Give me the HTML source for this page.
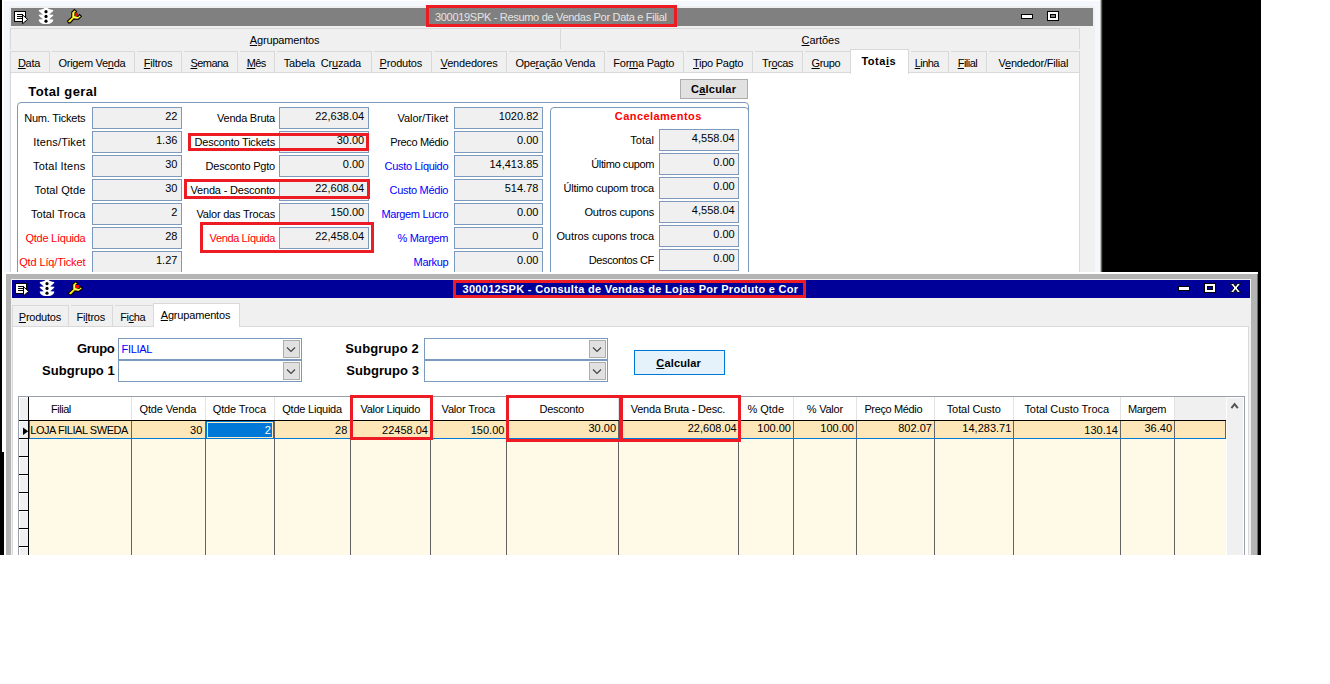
<!DOCTYPE html><html><head><meta charset="utf-8"><title>Resumo de Vendas</title><style>
html,body{margin:0;padding:0;background:#fff;}
body{width:1330px;height:684px;overflow:hidden;position:relative;font-family:"Liberation Sans",sans-serif;font-size:11px;}
.r{position:absolute;box-sizing:border-box;}
.t{position:absolute;white-space:pre;line-height:1;font-family:"Liberation Sans",sans-serif;}
.t u{text-decoration:underline;text-underline-offset:1px;text-decoration-thickness:1px;}
svg{position:absolute;overflow:visible;}
</style></head><body>
<div class="r" style="left:0px;top:0px;width:2px;height:555px;background:#000;"></div>
<div class="r" style="left:2px;top:452px;width:2px;height:103px;background:#000;"></div>
<div class="r" style="left:1100px;top:0px;width:1px;height:555px;background:#c4c4c4;"></div>
<div class="r" style="left:1101px;top:0px;width:1px;height:555px;background:#5e5e5e;"></div>
<div class="r" style="left:1102px;top:0px;width:1px;height:555px;background:#141414;"></div>
<div class="r" style="left:1103px;top:0px;width:158px;height:555px;background:#000;"></div>
<div class="r" style="left:4px;top:1px;width:1096px;height:272px;background:#f4f7fc;"></div>
<div class="r" style="left:9px;top:6px;width:1086px;height:268px;background:#f0f0f0;"></div>
<div class="r" style="left:11px;top:8px;width:1082px;height:18px;background:#808080;"></div>
<svg style="left:11px;top:8px" width="80" height="18" viewBox="0 0 80 18"><rect x="3.5" y="3.5" width="11" height="10" fill="#fff" stroke="#000" stroke-width="1"/><path d="M6 6.5H12M6 8.5H11.5M6 10.5H11.5" stroke="#000" stroke-width="1" fill="none"/><path d="M11.5 6.8L16.6 11.4L11.5 15.8Z" fill="#fff" stroke="#000" stroke-width="1" stroke-linejoin="miter"/><path d="M33.4 0H36.6C37.5 1.2 39.5 1.8 42.2 1.9V2.9L38.2 6.6L42.2 6.8V7.8L38.2 11.2L42.2 11.4V12.4C41.5 14.5 39 16 37 16H33C31 16 28.5 14.5 27.8 12.4V11.4L31.8 11.2L27.8 7.8V6.8L31.8 6.6L27.8 2.9V1.9C30.5 1.8 32.5 1.2 33.4 0Z" fill="#fff"/><circle cx="35" cy="3.7" r="1.6" fill="#000"/><circle cx="35" cy="8.4" r="1.6" fill="#000"/><circle cx="35" cy="13.2" r="1.6" fill="#000"/><path d="M63.4 1.6L65.6 3.5L64 5V7.6L67 8.3L68.5 6.6L70.4 8.3L67.5 11.1L63 10.9L59.2 14.9H57.5L56.5 13.1L60.8 9.1V4.3Z" fill="#ffee10" stroke="#000" stroke-width="1.1" stroke-linejoin="miter"/><path d="M62.2 4.6V8.6L63.4 9.8L67 10" stroke="#fff9a8" stroke-width="1" fill="none"/><rect x="64" y="5" width="3" height="3" fill="#ff0000"/></svg>
<div class="r" style="left:1021px;top:14px;width:12px;height:5px;background:#fff;border:1px solid #000;"></div>
<div class="r" style="left:1047px;top:11px;width:12px;height:10px;background:#fff;border:1px solid #000;"></div>
<div class="r" style="left:1050px;top:14px;width:6px;height:4px;background:#808080;border:1px solid #000;"></div>
<span class="t" style="top:12px;font-size:11px;color:#e4e4e4;letter-spacing:-0.309px;left:435.00px;">300019SPK - Resumo de Vendas Por Data e Filial</span>
<div class="r" style="left:426px;top:5px;width:251px;height:22px;border:3px solid #ed1c24;"></div>
<div class="r" style="left:10px;top:28px;width:551px;height:21px;background:#f0f0f0;border:1px solid #d9d9d9;border-bottom:none;"></div>
<div class="r" style="left:561px;top:28px;width:519px;height:21px;background:#f0f0f0;border:1px solid #d9d9d9;border-bottom:none;border-left:none;"></div>
<span class="t" style="top:35px;font-size:11px;color:#000;letter-spacing:-0.164px;left:249.80px;"><u>A</u>grupamentos</span>
<span class="t" style="top:35px;font-size:11px;color:#000;letter-spacing:-0.076px;left:801.60px;"><u>C</u>artões</span>
<div class="r" style="left:10px;top:51px;width:40px;height:22px;background:#f0f0f0;border:1px solid #d9d9d9;border-bottom:none;"></div>
<span class="t" style="top:58px;font-size:11px;color:#000;letter-spacing:-0.237px;left:17.90px;"><u>D</u>ata</span>
<div class="r" style="left:49px;top:51px;width:86px;height:22px;background:#f0f0f0;border:1px solid #d9d9d9;border-bottom:none;"></div>
<div class="r" style="left:50px;top:51px;width:2px;height:1px;background:#f0f0f0;"></div>
<span class="t" style="top:58px;font-size:11px;color:#000;letter-spacing:-0.295px;left:58.50px;">Origem Ve<u>n</u>da</span>
<div class="r" style="left:134px;top:51px;width:48px;height:22px;background:#f0f0f0;border:1px solid #d9d9d9;border-bottom:none;"></div>
<div class="r" style="left:135px;top:51px;width:2px;height:1px;background:#f0f0f0;"></div>
<span class="t" style="top:58px;font-size:11px;color:#000;letter-spacing:-0.224px;left:143.80px;"><u>F</u>iltros</span>
<div class="r" style="left:181px;top:51px;width:57px;height:22px;background:#f0f0f0;border:1px solid #d9d9d9;border-bottom:none;"></div>
<div class="r" style="left:182px;top:51px;width:2px;height:1px;background:#f0f0f0;"></div>
<span class="t" style="top:58px;font-size:11px;color:#000;letter-spacing:-0.581px;left:190.50px;"><u>S</u>emana</span>
<div class="r" style="left:237px;top:51px;width:38px;height:22px;background:#f0f0f0;border:1px solid #d9d9d9;border-bottom:none;"></div>
<div class="r" style="left:238px;top:51px;width:2px;height:1px;background:#f0f0f0;"></div>
<span class="t" style="top:58px;font-size:11px;color:#000;letter-spacing:-0.600px;left:246.70px;"><u>M</u>ês</span>
<div class="r" style="left:274px;top:51px;width:98px;height:22px;background:#f0f0f0;border:1px solid #d9d9d9;border-bottom:none;"></div>
<div class="r" style="left:275px;top:51px;width:2px;height:1px;background:#f0f0f0;"></div>
<span class="t" style="top:58px;font-size:11px;color:#000;letter-spacing:-0.195px;left:283.80px;">Tabela  Cr<u>u</u>zada</span>
<div class="r" style="left:371px;top:51px;width:61px;height:22px;background:#f0f0f0;border:1px solid #d9d9d9;border-bottom:none;"></div>
<div class="r" style="left:372px;top:51px;width:2px;height:1px;background:#f0f0f0;"></div>
<span class="t" style="top:58px;font-size:11px;color:#000;letter-spacing:-0.193px;left:379.60px;"><u>P</u>rodutos</span>
<div class="r" style="left:431px;top:51px;width:76px;height:22px;background:#f0f0f0;border:1px solid #d9d9d9;border-bottom:none;"></div>
<div class="r" style="left:432px;top:51px;width:2px;height:1px;background:#f0f0f0;"></div>
<span class="t" style="top:58px;font-size:11px;color:#000;letter-spacing:-0.183px;left:440.60px;"><u>V</u>endedores</span>
<div class="r" style="left:506px;top:51px;width:99px;height:22px;background:#f0f0f0;border:1px solid #d9d9d9;border-bottom:none;"></div>
<div class="r" style="left:507px;top:51px;width:2px;height:1px;background:#f0f0f0;"></div>
<span class="t" style="top:58px;font-size:11px;color:#000;letter-spacing:-0.200px;left:515.40px;">Ope<u>r</u>ação Venda</span>
<div class="r" style="left:604px;top:51px;width:80px;height:22px;background:#f0f0f0;border:1px solid #d9d9d9;border-bottom:none;"></div>
<div class="r" style="left:605px;top:51px;width:2px;height:1px;background:#f0f0f0;"></div>
<span class="t" style="top:58px;font-size:11px;color:#000;letter-spacing:-0.254px;left:613.30px;">For<u>m</u>a Pagto</span>
<div class="r" style="left:683px;top:51px;width:70px;height:22px;background:#f0f0f0;border:1px solid #d9d9d9;border-bottom:none;"></div>
<div class="r" style="left:684px;top:51px;width:2px;height:1px;background:#f0f0f0;"></div>
<span class="t" style="top:58px;font-size:11px;color:#000;letter-spacing:-0.260px;left:693.00px;"><u>T</u>ipo Pagto</span>
<div class="r" style="left:752px;top:51px;width:51px;height:22px;background:#f0f0f0;border:1px solid #d9d9d9;border-bottom:none;"></div>
<div class="r" style="left:753px;top:51px;width:2px;height:1px;background:#f0f0f0;"></div>
<span class="t" style="top:58px;font-size:11px;color:#000;letter-spacing:-0.339px;left:762.10px;">Tr<u>o</u>cas</span>
<div class="r" style="left:802px;top:51px;width:50px;height:22px;background:#f0f0f0;border:1px solid #d9d9d9;border-bottom:none;"></div>
<div class="r" style="left:803px;top:51px;width:2px;height:1px;background:#f0f0f0;"></div>
<span class="t" style="top:58px;font-size:11px;color:#000;letter-spacing:-0.359px;left:811.50px;"><u>G</u>rupo</span>
<div class="r" style="left:908px;top:51px;width:41px;height:22px;background:#f0f0f0;border:1px solid #d9d9d9;border-bottom:none;"></div>
<div class="r" style="left:909px;top:51px;width:2px;height:1px;background:#f0f0f0;"></div>
<span class="t" style="top:58px;font-size:11px;color:#000;letter-spacing:-0.564px;left:914.70px;"><u>L</u>inha</span>
<div class="r" style="left:948px;top:51px;width:39px;height:22px;background:#f0f0f0;border:1px solid #d9d9d9;border-bottom:none;"></div>
<div class="r" style="left:949px;top:51px;width:2px;height:1px;background:#f0f0f0;"></div>
<span class="t" style="top:58px;font-size:11px;color:#000;letter-spacing:-0.507px;left:957.70px;"><u>F</u>ilial</span>
<div class="r" style="left:986px;top:51px;width:94px;height:22px;background:#f0f0f0;border:1px solid #d9d9d9;border-bottom:none;"></div>
<div class="r" style="left:987px;top:51px;width:2px;height:1px;background:#f0f0f0;"></div>
<span class="t" style="top:58px;font-size:11px;color:#000;letter-spacing:-0.192px;left:998.40px;">V<u>e</u>ndedor/Filial</span>
<div class="r" style="left:10px;top:72px;width:1070px;height:202px;background:#fff;border:1px solid #d9d9d9;"></div>
<div class="r" style="left:850px;top:49px;width:59px;height:25px;background:#fff;border:1px solid #d9d9d9;border-bottom:none;"></div>
<span class="t" style="top:56px;font-size:11px;color:#000;font-weight:bold;letter-spacing:0.518px;left:861.40px;">Tota<u>i</u>s</span>
<span class="t" style="top:85px;font-size:13px;color:#000;font-weight:bold;letter-spacing:0.384px;left:28.30px;">Total geral</span>
<div class="r" style="left:680px;top:79px;width:68px;height:20px;background:#e1e1e1;border:1px solid #adadad;"></div>
<span class="t" style="top:84px;font-size:11px;color:#000;font-weight:bold;letter-spacing:0.220px;left:691.00px;">C<u>a</u>lcular</span>
<div class="r" style="left:17px;top:102px;width:732px;height:200px;border:1px solid #7c9abd;border-radius:4px;"></div>
<div class="r" style="left:550px;top:107px;width:199px;height:200px;border:1px solid #7c9abd;border-radius:4px;"></div>
<div class="r" style="left:92px;top:107px;width:90px;height:22px;background:#f0f0f0;border:1px solid #7c9abd;"></div>
<span class="t" style="top:111px;font-size:11px;color:#000;left:165.15px;">22</span>
<span class="t" style="top:113px;font-size:11px;color:#000;letter-spacing:-0.198px;left:24.20px;">Num. Tickets</span>
<div class="r" style="left:92px;top:131px;width:90px;height:22px;background:#f0f0f0;border:1px solid #7c9abd;"></div>
<span class="t" style="top:135px;font-size:11px;color:#000;left:155.98px;">1.36</span>
<span class="t" style="top:137px;font-size:11px;color:#000;letter-spacing:0.160px;left:33.30px;">Itens/Tiket</span>
<div class="r" style="left:92px;top:155px;width:90px;height:22px;background:#f0f0f0;border:1px solid #7c9abd;"></div>
<span class="t" style="top:159px;font-size:11px;color:#000;left:165.15px;">30</span>
<span class="t" style="top:161px;font-size:11px;color:#000;letter-spacing:0.196px;left:33.10px;">Total Itens</span>
<div class="r" style="left:92px;top:179px;width:90px;height:22px;background:#f0f0f0;border:1px solid #7c9abd;"></div>
<span class="t" style="top:183px;font-size:11px;color:#000;left:165.15px;">30</span>
<span class="t" style="top:185px;font-size:11px;color:#000;letter-spacing:0.086px;left:34.40px;">Total Qtde</span>
<div class="r" style="left:92px;top:203px;width:90px;height:22px;background:#f0f0f0;border:1px solid #7c9abd;"></div>
<span class="t" style="top:207px;font-size:11px;color:#000;left:171.28px;">2</span>
<span class="t" style="top:209px;font-size:11px;color:#000;letter-spacing:0.053px;left:31.00px;">Total Troca</span>
<div class="r" style="left:92px;top:227px;width:90px;height:22px;background:#f0f0f0;border:1px solid #7c9abd;"></div>
<span class="t" style="top:231px;font-size:11px;color:#000;left:165.15px;">28</span>
<span class="t" style="top:233px;font-size:11px;color:#f00;letter-spacing:-0.258px;left:25.50px;">Qtde Líquida</span>
<div class="r" style="left:92px;top:251px;width:90px;height:22px;background:#f0f0f0;border:1px solid #7c9abd;"></div>
<span class="t" style="top:255px;font-size:11px;color:#000;left:155.98px;">1.27</span>
<span class="t" style="top:257px;font-size:11px;color:#f00;letter-spacing:-0.133px;left:19.20px;">Qtd Líq/Ticket</span>
<div class="r" style="left:279px;top:107px;width:90px;height:22px;background:#f0f0f0;border:1px solid #7c9abd;"></div>
<span class="t" style="top:111px;font-size:11px;color:#000;left:315.26px;">22,638.04</span>
<span class="t" style="top:113px;font-size:11px;color:#000;letter-spacing:-0.233px;left:217.00px;">Venda Bruta</span>
<div class="r" style="left:279px;top:131px;width:90px;height:22px;background:#f0f0f0;border:1px solid #7c9abd;"></div>
<span class="t" style="top:135px;font-size:11px;color:#000;left:336.67px;">30.00</span>
<span class="t" style="top:137px;font-size:11px;color:#000;letter-spacing:-0.210px;left:194.60px;">Desconto Tickets</span>
<div class="r" style="left:279px;top:155px;width:90px;height:22px;background:#f0f0f0;border:1px solid #7c9abd;"></div>
<span class="t" style="top:159px;font-size:11px;color:#000;left:342.78px;">0.00</span>
<span class="t" style="top:161px;font-size:11px;color:#000;letter-spacing:-0.212px;left:205.60px;">Desconto Pgto</span>
<div class="r" style="left:279px;top:179px;width:90px;height:22px;background:#f0f0f0;border:1px solid #7c9abd;"></div>
<span class="t" style="top:183px;font-size:11px;color:#000;left:315.26px;">22,608.04</span>
<span class="t" style="top:185px;font-size:11px;color:#000;letter-spacing:-0.185px;left:190.50px;">Venda - Desconto</span>
<div class="r" style="left:279px;top:203px;width:90px;height:22px;background:#f0f0f0;border:1px solid #7c9abd;"></div>
<span class="t" style="top:207px;font-size:11px;color:#000;left:330.54px;">150.00</span>
<span class="t" style="top:209px;font-size:11px;color:#000;letter-spacing:-0.202px;left:196.50px;">Valor das Trocas</span>
<div class="r" style="left:279px;top:227px;width:90px;height:22px;background:#f0f0f0;border:1px solid #7c9abd;"></div>
<span class="t" style="top:231px;font-size:11px;color:#000;left:315.26px;">22,458.04</span>
<span class="t" style="top:233px;font-size:11px;color:#f00;letter-spacing:-0.381px;left:209.60px;">Venda Líquida</span>
<div class="r" style="left:454px;top:107px;width:89px;height:22px;background:#f0f0f0;border:1px solid #7c9abd;"></div>
<span class="t" style="top:111px;font-size:11px;color:#000;left:498.63px;">1020.82</span>
<span class="t" style="top:113px;font-size:11px;color:#000;letter-spacing:-0.060px;left:397.50px;">Valor/Tiket</span>
<div class="r" style="left:454px;top:131px;width:89px;height:22px;background:#f0f0f0;border:1px solid #7c9abd;"></div>
<span class="t" style="top:135px;font-size:11px;color:#000;left:516.98px;">0.00</span>
<span class="t" style="top:137px;font-size:11px;color:#000;letter-spacing:-0.351px;left:390.30px;">Preco Médio</span>
<div class="r" style="left:454px;top:155px;width:89px;height:22px;background:#f0f0f0;border:1px solid #7c9abd;"></div>
<span class="t" style="top:159px;font-size:11px;color:#000;left:489.46px;">14,413.85</span>
<span class="t" style="top:161px;font-size:11px;color:#00f;letter-spacing:-0.330px;left:384.60px;">Custo Líquido</span>
<div class="r" style="left:454px;top:179px;width:89px;height:22px;background:#f0f0f0;border:1px solid #7c9abd;"></div>
<span class="t" style="top:183px;font-size:11px;color:#000;left:504.74px;">514.78</span>
<span class="t" style="top:185px;font-size:11px;color:#00f;letter-spacing:-0.279px;left:389.50px;">Custo Médio</span>
<div class="r" style="left:454px;top:203px;width:89px;height:22px;background:#f0f0f0;border:1px solid #7c9abd;"></div>
<span class="t" style="top:207px;font-size:11px;color:#000;left:516.98px;">0.00</span>
<span class="t" style="top:209px;font-size:11px;color:#00f;letter-spacing:-0.343px;left:381.40px;">Margem Lucro</span>
<div class="r" style="left:454px;top:227px;width:89px;height:22px;background:#f0f0f0;border:1px solid #7c9abd;"></div>
<span class="t" style="top:231px;font-size:11px;color:#000;left:532.27px;">0</span>
<span class="t" style="top:233px;font-size:11px;color:#00f;letter-spacing:-0.323px;left:397.60px;">% Margem</span>
<div class="r" style="left:454px;top:251px;width:89px;height:22px;background:#f0f0f0;border:1px solid #7c9abd;"></div>
<span class="t" style="top:255px;font-size:11px;color:#000;left:516.98px;">0.00</span>
<span class="t" style="top:257px;font-size:11px;color:#00f;letter-spacing:-0.348px;left:413.60px;">Markup</span>
<span class="t" style="top:111px;font-size:11px;color:#f00;font-weight:bold;letter-spacing:0.438px;left:614.80px;">Cancelamentos</span>
<div class="r" style="left:659px;top:129px;width:80px;height:22px;background:#f0f0f0;border:1px solid #7c9abd;"></div>
<span class="t" style="top:133px;font-size:11px;color:#000;left:691.87px;">4,558.04</span>
<span class="t" style="top:135px;font-size:11px;color:#000;letter-spacing:0.110px;left:630.20px;">Total</span>
<div class="r" style="left:659px;top:153px;width:80px;height:22px;background:#f0f0f0;border:1px solid #7c9abd;"></div>
<span class="t" style="top:157px;font-size:11px;color:#000;left:713.28px;">0.00</span>
<span class="t" style="top:159px;font-size:11px;color:#000;letter-spacing:-0.379px;left:591.30px;">Último cupom</span>
<div class="r" style="left:659px;top:177px;width:80px;height:22px;background:#f0f0f0;border:1px solid #7c9abd;"></div>
<span class="t" style="top:181px;font-size:11px;color:#000;left:713.28px;">0.00</span>
<span class="t" style="top:183px;font-size:11px;color:#000;letter-spacing:-0.237px;left:563.50px;">Último cupom troca</span>
<div class="r" style="left:659px;top:201px;width:80px;height:22px;background:#f0f0f0;border:1px solid #7c9abd;"></div>
<span class="t" style="top:205px;font-size:11px;color:#000;left:691.87px;">4,558.04</span>
<span class="t" style="top:207px;font-size:11px;color:#000;letter-spacing:-0.150px;left:584.40px;">Outros cupons</span>
<div class="r" style="left:659px;top:225px;width:80px;height:22px;background:#f0f0f0;border:1px solid #7c9abd;"></div>
<span class="t" style="top:229px;font-size:11px;color:#000;left:713.28px;">0.00</span>
<span class="t" style="top:231px;font-size:11px;color:#000;letter-spacing:-0.077px;left:556.40px;">Outros cupons troca</span>
<div class="r" style="left:659px;top:249px;width:80px;height:22px;background:#f0f0f0;border:1px solid #7c9abd;"></div>
<span class="t" style="top:253px;font-size:11px;color:#000;left:713.28px;">0.00</span>
<span class="t" style="top:255px;font-size:11px;color:#000;letter-spacing:-0.367px;left:588.70px;">Descontos CF</span>
<div class="r" style="left:188px;top:133px;width:181px;height:18px;border:3px solid #ed1c24;"></div>
<div class="r" style="left:184px;top:179px;width:186px;height:20px;border:3px solid #ed1c24;"></div>
<div class="r" style="left:200px;top:222px;width:174px;height:31px;border:3px solid #ed1c24;"></div>
<div class="r" style="left:4px;top:272px;width:1254px;height:283px;background:#fff;"></div>
<div class="r" style="left:6px;top:274px;width:1252px;height:281px;background:#b4b4b4;"></div>
<div class="r" style="left:1257px;top:274px;width:1px;height:281px;background:#6a6a6a;"></div>
<div class="r" style="left:11px;top:279px;width:1240px;height:276px;background:#f0f0f0;"></div>
<div class="r" style="left:12px;top:280px;width:1238px;height:18px;background:#000099;"></div>
<svg style="left:12px;top:280px" width="80" height="18" viewBox="0 0 80 18"><rect x="3.5" y="3.5" width="11" height="10" fill="#fff" stroke="#000" stroke-width="1"/><path d="M6 6.5H12M6 8.5H11.5M6 10.5H11.5" stroke="#000" stroke-width="1" fill="none"/><path d="M11.5 6.8L16.6 11.4L11.5 15.8Z" fill="#fff" stroke="#000" stroke-width="1" stroke-linejoin="miter"/><path d="M33.4 0H36.6C37.5 1.2 39.5 1.8 42.2 1.9V2.9L38.2 6.6L42.2 6.8V7.8L38.2 11.2L42.2 11.4V12.4C41.5 14.5 39 16 37 16H33C31 16 28.5 14.5 27.8 12.4V11.4L31.8 11.2L27.8 7.8V6.8L31.8 6.6L27.8 2.9V1.9C30.5 1.8 32.5 1.2 33.4 0Z" fill="#fff"/><circle cx="35" cy="3.7" r="1.6" fill="#000"/><circle cx="35" cy="8.4" r="1.6" fill="#000"/><circle cx="35" cy="13.2" r="1.6" fill="#000"/><path d="M63.4 1.6L65.6 3.5L64 5V7.6L67 8.3L68.5 6.6L70.4 8.3L67.5 11.1L63 10.9L59.2 14.9H57.5L56.5 13.1L60.8 9.1V4.3Z" fill="#ffee10" stroke="#000" stroke-width="1.1" stroke-linejoin="miter"/><path d="M62.2 4.6V8.6L63.4 9.8L67 10" stroke="#fff9a8" stroke-width="1" fill="none"/><rect x="64" y="5" width="3" height="3" fill="#ff0000"/></svg>
<div class="r" style="left:1178px;top:286px;width:12px;height:5px;background:#fff;border:1px solid #000;"></div>
<div class="r" style="left:1204px;top:283px;width:12px;height:10px;background:#fff;border:1px solid #000;"></div>
<div class="r" style="left:1207px;top:286px;width:6px;height:4px;background:#000099;border:1px solid #000;"></div>
<svg style="left:1229px;top:282px" width="14" height="12" viewBox="0 0 14 12"><path d="M1.2 1.4H4.4L6.5 4.3L8.6 1.4H11.8L8.1 6L11.8 10.6H8.6L6.5 7.7L4.4 10.6H1.2L4.9 6Z" fill="#fff" stroke="#000" stroke-width="1" stroke-linejoin="miter"/></svg>
<span class="t" style="top:284px;font-size:11px;color:#fff;font-weight:bold;letter-spacing:0.295px;left:462.50px;">300012SPK - Consulta de Vendas de Lojas Por Produto e Cor</span>
<div class="r" style="left:453px;top:280px;width:353px;height:18px;border:3px solid #ed1c24;"></div>
<div class="r" style="left:12px;top:305px;width:57px;height:22px;background:#f0f0f0;border:1px solid #d9d9d9;border-bottom:none;"></div>
<span class="t" style="top:312px;font-size:11px;color:#000;letter-spacing:-0.243px;left:18.80px;"><u>P</u>rodutos</span>
<div class="r" style="left:68px;top:305px;width:45px;height:22px;background:#f0f0f0;border:1px solid #d9d9d9;border-bottom:none;"></div>
<div class="r" style="left:69px;top:305px;width:2px;height:1px;background:#f0f0f0;"></div>
<span class="t" style="top:312px;font-size:11px;color:#000;letter-spacing:-0.196px;left:76.50px;">Fi<u>l</u>tros</span>
<div class="r" style="left:112px;top:305px;width:42px;height:22px;background:#f0f0f0;border:1px solid #d9d9d9;border-bottom:none;"></div>
<div class="r" style="left:113px;top:305px;width:2px;height:1px;background:#f0f0f0;"></div>
<span class="t" style="top:312px;font-size:11px;color:#000;letter-spacing:-0.424px;left:120.30px;">Fi<u>c</u>ha</span>
<div class="r" style="left:12px;top:326px;width:1237px;height:240px;background:#fff;border:1px solid #d9d9d9;"></div>
<div class="r" style="left:153px;top:303px;width:87px;height:24px;background:#fff;border:1px solid #d9d9d9;border-bottom:none;"></div>
<span class="t" style="top:310px;font-size:11px;color:#000;letter-spacing:-0.164px;left:160.70px;"><u>A</u>grupamentos</span>
<div class="r" style="left:118px;top:338px;width:184px;height:22px;background:#fff;border:1px solid #7c9abd;"></div>
<div class="r" style="left:283px;top:340px;width:17px;height:18px;background:#e1e1e1;border:1px solid #adadad;"></div>
<svg style="left:283px;top:340px" width="17" height="18" viewBox="0 0 17 18"><path d="M4 7.5L8 11.5L12 7.5" stroke="#404040" stroke-width="1.1" fill="none"/></svg>
<span class="t" style="top:344px;font-size:11px;color:#00f;letter-spacing:-0.318px;left:121.50px;">FILIAL</span>
<div class="r" style="left:118px;top:360px;width:184px;height:22px;background:#fff;border:1px solid #7c9abd;"></div>
<div class="r" style="left:283px;top:362px;width:17px;height:18px;background:#e1e1e1;border:1px solid #adadad;"></div>
<svg style="left:283px;top:362px" width="17" height="18" viewBox="0 0 17 18"><path d="M4 7.5L8 11.5L12 7.5" stroke="#404040" stroke-width="1.1" fill="none"/></svg>
<div class="r" style="left:424px;top:338px;width:184px;height:22px;background:#fff;border:1px solid #7c9abd;"></div>
<div class="r" style="left:589px;top:340px;width:17px;height:18px;background:#e1e1e1;border:1px solid #adadad;"></div>
<svg style="left:589px;top:340px" width="17" height="18" viewBox="0 0 17 18"><path d="M4 7.5L8 11.5L12 7.5" stroke="#404040" stroke-width="1.1" fill="none"/></svg>
<div class="r" style="left:424px;top:360px;width:184px;height:22px;background:#fff;border:1px solid #7c9abd;"></div>
<div class="r" style="left:589px;top:362px;width:17px;height:18px;background:#e1e1e1;border:1px solid #adadad;"></div>
<svg style="left:589px;top:362px" width="17" height="18" viewBox="0 0 17 18"><path d="M4 7.5L8 11.5L12 7.5" stroke="#404040" stroke-width="1.1" fill="none"/></svg>
<span class="t" style="top:342px;font-size:13px;color:#000;font-weight:bold;letter-spacing:-0.300px;left:77.00px;">Grupo</span>
<span class="t" style="top:364px;font-size:13px;color:#000;font-weight:bold;letter-spacing:0.048px;left:42.10px;">Subgrupo 1</span>
<span class="t" style="top:342px;font-size:13px;color:#000;font-weight:bold;letter-spacing:0.128px;left:345.30px;">Subgrupo 2</span>
<span class="t" style="top:364px;font-size:13px;color:#000;font-weight:bold;letter-spacing:0.058px;left:346.20px;">Subgrupo 3</span>
<div class="r" style="left:634px;top:350px;width:91px;height:25px;background:#e5f1fb;border:1px solid #0078d7;"></div>
<span class="t" style="top:358px;font-size:11px;color:#000;font-weight:bold;letter-spacing:0.160px;left:656.30px;"><u>C</u>alcular</span>
<div class="r" style="left:18px;top:396px;width:1227px;height:170px;background:#fff;border:1px solid #9a9eac;"></div>
<div class="r" style="left:19px;top:397px;width:9px;height:23px;background:#f0f0f0;"></div>
<div class="r" style="left:1175px;top:397px;width:51px;height:23px;background:#f0f0f0;"></div>
<div class="r" style="left:1227px;top:398px;width:16px;height:160px;background:#f0f0f0;"></div>
<div class="r" style="left:29px;top:421px;width:1197px;height:17px;background:#fde7b8;"></div>
<div class="r" style="left:29px;top:439px;width:1197px;height:120px;background:#fff9e8;"></div>
<div class="r" style="left:19px;top:421px;width:9px;height:140px;background:#f0f0f0;"></div>
<div class="r" style="left:131px;top:397px;width:1px;height:23px;background:#e3e3e3;"></div>
<div class="r" style="left:131px;top:421px;width:1px;height:140px;background:#636363;"></div>
<div class="r" style="left:205px;top:397px;width:1px;height:23px;background:#e3e3e3;"></div>
<div class="r" style="left:205px;top:421px;width:1px;height:140px;background:#636363;"></div>
<div class="r" style="left:274px;top:397px;width:1px;height:23px;background:#e3e3e3;"></div>
<div class="r" style="left:274px;top:421px;width:1px;height:140px;background:#636363;"></div>
<div class="r" style="left:350px;top:397px;width:1px;height:23px;background:#e3e3e3;"></div>
<div class="r" style="left:350px;top:421px;width:1px;height:140px;background:#636363;"></div>
<div class="r" style="left:430px;top:397px;width:1px;height:23px;background:#e3e3e3;"></div>
<div class="r" style="left:430px;top:421px;width:1px;height:140px;background:#636363;"></div>
<div class="r" style="left:506px;top:397px;width:1px;height:23px;background:#e3e3e3;"></div>
<div class="r" style="left:506px;top:421px;width:1px;height:140px;background:#636363;"></div>
<div class="r" style="left:618px;top:397px;width:1px;height:23px;background:#e3e3e3;"></div>
<div class="r" style="left:618px;top:421px;width:1px;height:140px;background:#636363;"></div>
<div class="r" style="left:738px;top:397px;width:1px;height:23px;background:#e3e3e3;"></div>
<div class="r" style="left:738px;top:421px;width:1px;height:140px;background:#636363;"></div>
<div class="r" style="left:793px;top:397px;width:1px;height:23px;background:#e3e3e3;"></div>
<div class="r" style="left:793px;top:421px;width:1px;height:140px;background:#636363;"></div>
<div class="r" style="left:856px;top:397px;width:1px;height:23px;background:#e3e3e3;"></div>
<div class="r" style="left:856px;top:421px;width:1px;height:140px;background:#636363;"></div>
<div class="r" style="left:934px;top:397px;width:1px;height:23px;background:#e3e3e3;"></div>
<div class="r" style="left:934px;top:421px;width:1px;height:140px;background:#636363;"></div>
<div class="r" style="left:1013px;top:397px;width:1px;height:23px;background:#e3e3e3;"></div>
<div class="r" style="left:1013px;top:421px;width:1px;height:140px;background:#636363;"></div>
<div class="r" style="left:1120px;top:397px;width:1px;height:23px;background:#e3e3e3;"></div>
<div class="r" style="left:1120px;top:421px;width:1px;height:140px;background:#636363;"></div>
<div class="r" style="left:1174px;top:397px;width:1px;height:23px;background:#e3e3e3;"></div>
<div class="r" style="left:1174px;top:421px;width:1px;height:140px;background:#636363;"></div>
<div class="r" style="left:19px;top:397px;width:1px;height:160px;background:#fff;"></div>
<div class="r" style="left:19px;top:397px;width:9px;height:1px;background:#fff;"></div>
<div class="r" style="left:19px;top:421px;width:9px;height:1px;background:#fff;"></div>
<div class="r" style="left:19px;top:439px;width:9px;height:1px;background:#fff;"></div>
<div class="r" style="left:19px;top:457px;width:9px;height:1px;background:#fff;"></div>
<div class="r" style="left:19px;top:475px;width:9px;height:1px;background:#fff;"></div>
<div class="r" style="left:19px;top:493px;width:9px;height:1px;background:#fff;"></div>
<div class="r" style="left:19px;top:511px;width:9px;height:1px;background:#fff;"></div>
<div class="r" style="left:19px;top:529px;width:9px;height:1px;background:#fff;"></div>
<div class="r" style="left:19px;top:547px;width:9px;height:1px;background:#fff;"></div>
<div class="r" style="left:28px;top:397px;width:1px;height:160px;background:#000;"></div>
<div class="r" style="left:19px;top:420px;width:1207px;height:1px;background:#000;"></div>
<div class="r" style="left:19px;top:438px;width:10px;height:1px;background:#000;"></div>
<div class="r" style="left:19px;top:456px;width:10px;height:1px;background:#000;"></div>
<div class="r" style="left:19px;top:474px;width:10px;height:1px;background:#000;"></div>
<div class="r" style="left:19px;top:492px;width:10px;height:1px;background:#000;"></div>
<div class="r" style="left:19px;top:510px;width:10px;height:1px;background:#000;"></div>
<div class="r" style="left:19px;top:528px;width:10px;height:1px;background:#000;"></div>
<div class="r" style="left:19px;top:546px;width:10px;height:1px;background:#000;"></div>
<div class="r" style="left:29px;top:438px;width:1197px;height:1px;background:#0078d7;"></div>
<div class="r" style="left:29px;top:421px;width:1px;height:18px;background:#0078d7;"></div>
<div class="r" style="left:1225px;top:421px;width:1px;height:18px;background:#0078d7;"></div>
<svg style="left:21px;top:424px" width="8" height="12" viewBox="0 0 8 12"><path d="M2 3.6L7.2 7.3L2 11Z" fill="#000"/></svg>
<svg style="left:1228px;top:400px" width="14" height="14" viewBox="0 0 14 14"><path d="M3.4 8.2L6.6 4.2L9.8 8.2" stroke="#555" stroke-width="2" fill="none" stroke-linejoin="miter"/></svg>
<span class="t" style="top:404px;font-size:11px;color:#000;letter-spacing:-0.471px;left:51.00px;">Filial</span>
<span class="t" style="top:404px;font-size:11px;color:#000;letter-spacing:-0.151px;left:139.50px;">Qtde Venda</span>
<span class="t" style="top:404px;font-size:11px;color:#000;letter-spacing:-0.112px;left:212.70px;">Qtde Troca</span>
<span class="t" style="top:404px;font-size:11px;color:#000;letter-spacing:-0.233px;left:282.30px;">Qtde Liquida</span>
<span class="t" style="top:404px;font-size:11px;color:#000;letter-spacing:-0.300px;left:360.50px;">Valor Liquido</span>
<span class="t" style="top:404px;font-size:11px;color:#000;letter-spacing:-0.185px;left:441.60px;">Valor Troca</span>
<span class="t" style="top:404px;font-size:11px;color:#000;letter-spacing:-0.286px;left:539.60px;">Desconto</span>
<span class="t" style="top:404px;font-size:11px;color:#000;letter-spacing:-0.208px;left:630.70px;">Venda Bruta - Desc.</span>
<span class="t" style="top:404px;font-size:11px;color:#000;letter-spacing:-0.048px;left:747.60px;">% Qtde</span>
<span class="t" style="top:404px;font-size:11px;color:#000;letter-spacing:-0.243px;left:806.80px;">% Valor</span>
<span class="t" style="top:404px;font-size:11px;color:#000;letter-spacing:-0.361px;left:864.40px;">Preço Médio</span>
<span class="t" style="top:404px;font-size:11px;color:#000;letter-spacing:-0.085px;left:946.70px;">Total Custo</span>
<span class="t" style="top:404px;font-size:11px;color:#000;letter-spacing:-0.058px;left:1024.40px;">Total Custo Troca</span>
<span class="t" style="top:404px;font-size:11px;color:#000;letter-spacing:-0.391px;left:1128.00px;">Margem</span>
<span class="t" style="top:425px;font-size:11px;color:#000;letter-spacing:-0.456px;left:30.30px;">LOJA FILIAL SWEDA</span>
<span class="t" style="top:425px;font-size:11px;color:#000;left:190.05px;">30</span>
<span class="t" style="top:425px;font-size:11px;color:#000;left:335.05px;">28</span>
<span class="t" style="top:425px;font-size:11px;color:#000;left:382.11px;">22458.04</span>
<span class="t" style="top:425px;font-size:11px;color:#000;left:470.74px;">150.00</span>
<span class="t" style="top:423px;font-size:11px;color:#000;left:588.47px;">30.00</span>
<span class="t" style="top:423px;font-size:11px;color:#000;left:687.76px;">22,608.04</span>
<span class="t" style="top:423px;font-size:11px;color:#000;left:757.34px;">100.00</span>
<span class="t" style="top:423px;font-size:11px;color:#000;left:820.34px;">100.00</span>
<span class="t" style="top:423px;font-size:11px;color:#000;left:898.24px;">802.07</span>
<span class="t" style="top:423px;font-size:11px;color:#000;left:962.36px;">14,283.71</span>
<span class="t" style="top:425px;font-size:11px;color:#000;left:1084.34px;">130.14</span>
<span class="t" style="top:423px;font-size:11px;color:#000;left:1144.47px;">36.40</span>
<div class="r" style="left:206px;top:421px;width:68px;height:18px;background:#0078d7;"></div>
<div class="r" style="left:207px;top:422px;width:66px;height:16px;border:1px solid #ffe9c0;"></div>
<span class="t" style="top:425px;font-size:11px;color:#fff;left:264.68px;">2</span>
<div class="r" style="left:350px;top:395px;width:83px;height:45px;border:3px solid #ed1c24;"></div>
<div class="r" style="left:506px;top:395px;width:117px;height:47px;border:3px solid #ed1c24;"></div>
<div class="r" style="left:619px;top:395px;width:122px;height:47px;border:3px solid #ed1c24;"></div>
<div class="r" style="left:0px;top:555px;width:1330px;height:129px;background:#fff;"></div>
<div class="r" style="left:1261px;top:0px;width:69px;height:684px;background:#fff;"></div>
</body></html>
